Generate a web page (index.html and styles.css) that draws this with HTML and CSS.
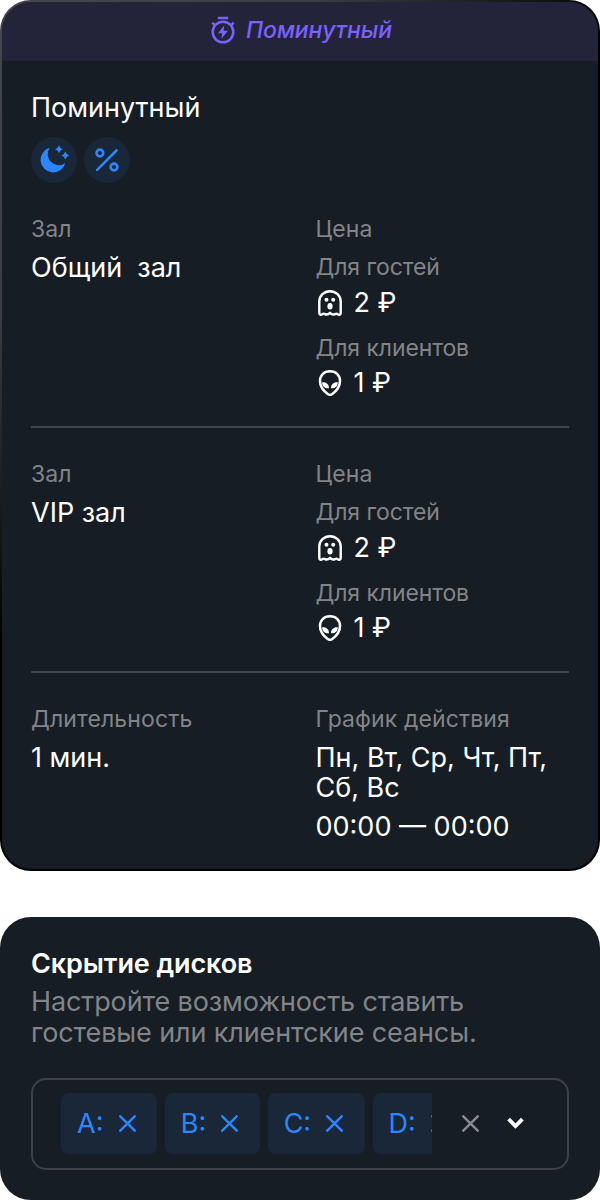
FILE: index.html
```html
<!DOCTYPE html>
<html lang="ru">
<head>
<meta charset="utf-8">
<title>Поминутный</title>
<link rel="stylesheet" href="styles.css">
</head>

<body>

<svg class="sprite">
  <symbol id="ghost" viewBox="0 0 24 26">
    <path d="M1.300 23V11.500a10.700 10.300 0 0 1 21.400 0V23c0 1.600-1.500 2.100-2.900 1.300q-1.500-1.300-3.200 0-2.300 1-4.600-1.500-2.300 2.500-4.600 1.500-1.700-1.300-3.200 0c-1.400.8-2.900.3-2.900-1.300Z" fill="none" stroke="currentColor" stroke-width="2.400" stroke-linejoin="round"/>
    <circle cx="8.500" cy="9.800" r="2" fill="currentColor"/>
    <circle cx="15.200" cy="9.800" r="2" fill="currentColor"/>
    <ellipse cx="12" cy="16.300" rx="2.600" ry="3.200" fill="currentColor"/>
  </symbol>
  <symbol id="alien" viewBox="0 0 24 26">
    <path d="M12 1.300c6.300 0 10 4.200 10 9.700 0 5.300-4 10.300-7.700 13-1.500 1.100-3.100 1.100-4.600 0C6 21.300 2 16.300 2 11c0-5.500 3.700-9.700 10-9.700Z" fill="none" stroke="currentColor" stroke-width="2.500"/>
    <path d="M4.200 12.200c3.900-.5 7 2 6.800 6-3.900.5-7-2-6.800-6ZM19.800 12.200c-3.900-.5-7 2-6.800 6 3.900.5 7-2 6.800-6Z" fill="currentColor"/>
  </symbol>
  <symbol id="cross" viewBox="0 0 16 16">
    <path d="M1.200 1.200l13.600 13.600M14.800 1.200L1.200 14.800" fill="none" stroke="currentColor" stroke-width="2.300" stroke-linecap="round"/>
  </symbol>
</svg>

<div class="tariff">
  <div class="type">
    <svg width="24" height="28" viewBox="0 0 24 28">
      <g fill="none" stroke="currentColor" stroke-width="2.500">
        <circle cx="12" cy="16" r="10.300"/>
        <path d="M6.800 2h10.400M1.300 6.600l3 3M22.700 6.600l-3 3"/>
      </g>
      <path d="M13.300 9.300L7 17.300h4.200l-.8 5.500 6.600-8.100h-4.400z" fill="currentColor"/>
    </svg>
    <span>Поминутный</span>
  </div>

  <div class="content">
    <h2>Поминутный</h2>
    <div class="badges">
      <div class="badge">
        <svg width="30" height="30" viewBox="0 0 30 30">
          <path d="M10.800 2.700A12.600 12.600 0 1 0 26.400 17.900 11 11 0 0 1 10.800 2.700Z" fill="currentColor"/>
          <path d="M20 0q.9 3.500 4.200 4.200-3.300.8-4.200 4.200-.9-3.400-4.200-4.200Q19.100 3.500 20 0ZM26.300 6.200q.9 3.500 4.200 4.200-3.300.8-4.200 4.200-.9-3.400-4.200-4.200 3.300-.7 4.200-4.200Z" fill="currentColor"/>
        </svg>
      </div>
      <div class="badge">
        <svg width="24" height="24" viewBox="0 0 24 24">
          <g fill="none" stroke="currentColor" stroke-width="2.600" stroke-linecap="round">
            <circle cx="4.900" cy="5" r="3.400"/>
            <circle cx="19" cy="19" r="3.400"/>
            <path d="M2.200 21.800L21.500 2.500"/>
          </g>
        </svg>
      </div>
    </div>

    <div class="row">
      <div>
        <div class="label">Зал</div>
        <div class="value">Общий&nbsp; зал</div>
      </div>
      <div>
        <div class="label">Цена</div>
        <div class="label who">Для гостей</div>
        <div class="price"><svg><use href="#ghost"/></svg>2 ₽</div>
        <div class="label who next">Для клиентов</div>
        <div class="price"><svg><use href="#alien"/></svg>1 ₽</div>
      </div>
    </div>

    <div class="row">
      <div>
        <div class="label">Зал</div>
        <div class="value">VIP зал</div>
      </div>
      <div>
        <div class="label">Цена</div>
        <div class="label who">Для гостей</div>
        <div class="price"><svg><use href="#ghost"/></svg>2 ₽</div>
        <div class="label who next">Для клиентов</div>
        <div class="price"><svg><use href="#alien"/></svg>1 ₽</div>
      </div>
    </div>

    <div class="row">
      <div>
        <div class="label">Длительность</div>
        <div class="value">1 мин.</div>
      </div>
      <div>
        <div class="label">График действия</div>
        <div class="value">Пн, Вт, Ср, Чт, Пт,<br>Сб, Вс</div>
        <div class="time">00:00 — 00:00</div>
      </div>
    </div>
  </div>
</div>

<div class="disks">
  <h3>Скрытие дисков</h3>
  <p>Настройте возможность ставить<br>гостевые или клиентские сеансы.</p>
  <div class="select">
    <div class="tags">
      <div class="tag"><span>A:</span><svg><use href="#cross"/></svg></div>
      <div class="tag"><span>B:</span><svg><use href="#cross"/></svg></div>
      <div class="tag"><span>C:</span><svg><use href="#cross"/></svg></div>
      <div class="tag"><span>D:</span><svg><use href="#cross"/></svg></div>
    </div>
    <svg class="clear"><use href="#cross"/></svg>
    <svg class="arrow" viewBox="0 0 16 12">
      <path d="M1.500 2l6.500 6.500L14.500 2" fill="none" stroke="currentColor" stroke-width="3.600"/>
    </svg>
  </div>
</div>

</body>
</html>
```
FILE: styles.css
```css
* { box-sizing: border-box; }

body {
  margin: 0;
  background: #fff;
  color: #fff;
  font: 27px/30.7px Inter, "Noto Sans", sans-serif;
}

h2, h3, p {
  margin: 0;
  font-size: inherit;
}

.sprite { display: none; }

.tariff {
  height: 871px;
  border: 2px solid transparent;
  border-radius: 31px;
  background:
    linear-gradient(#161d24, #161d24) padding-box,
    linear-gradient(135deg, #46464e, #3c3c40 22%, #000 44%) border-box;
}

.type {
  display: flex;
  align-items: center;
  justify-content: center;
  gap: 11px;
  height: 59px;
  padding: 0 0 2px 3px;
  border-radius: 29px 29px 0 0;
  background: #23243a;
  color: #7b61ff;
  font-size: 23px;
  font-style: italic;
  font-weight: 500;
  letter-spacing: -0.1px;
}

.type svg { margin-top: -2px; }

.content { padding: 32px 29px 0; }

h2 { font-weight: 400; }

.badges {
  display: flex;
  gap: 7.500px;
  margin: 13.500px 0 0 -0.500px;
}

.badge {
  display: flex;
  align-items: center;
  justify-content: center;
  width: 46px;
  height: 46px;
  border-radius: 50%;
  background: #192738;
  color: #2b87ff;
}

.row {
  display: grid;
  grid-template-columns: 1fr 1fr;
  column-gap: 31px;
  padding-top: 32.500px;
}

.row + .row {
  margin-top: 26.900px;
  padding-top: 32.700px;
  border-top: 2px solid #45464c;
}

.label {
  color: #838488;
  font-size: 23px;
  line-height: 27px;
  letter-spacing: 0.12px;
}

.value { margin-top: 10px; }

.who {
  margin-top: 11.500px;
  letter-spacing: -0.1px;
}

.next { margin-top: 16.500px; }

.price {
  display: flex;
  align-items: center;
  gap: 11.500px;
  margin-top: 6.500px;
}

.price svg {
  width: 24px;
  height: 26px;
  margin: -1px 0 0 2.500px;
}

.time { margin-top: 7.700px; }

.disks {
  height: 283px;
  margin-top: 46px;
  padding: 32px 31px 0;
  border-radius: 31px;
  background: #161d24;
}

h3 {
  font-weight: 600;
  letter-spacing: -0.1px;
}

p {
  margin-top: 7.700px;
  color: #838488;
  letter-spacing: -0.12px;
}

.select {
  display: flex;
  align-items: center;
  height: 92px;
  margin-top: 29px;
  padding-left: 28px;
  border: 2px solid #404147;
  border-radius: 15px;
}

.tags {
  display: flex;
  gap: 7.500px;
  width: 371px;
  overflow: hidden;
}

.tag {
  display: flex;
  flex: none;
  align-items: center;
  gap: 15.200px;
  height: 61px;
  padding: 1px 21.700px 0 16px;
  border-radius: 7.500px;
  background: #192738;
  color: #2b87ff;
}

.tag svg, .clear {
  width: 17px;
  height: 17px;
}

.tag svg { margin-top: -1px; }

.clear {
  margin-left: 30px;
  color: #8b8c90;
}

.arrow {
  width: 17px;
  height: 12.700px;
  margin-left: 28px;
}
```
